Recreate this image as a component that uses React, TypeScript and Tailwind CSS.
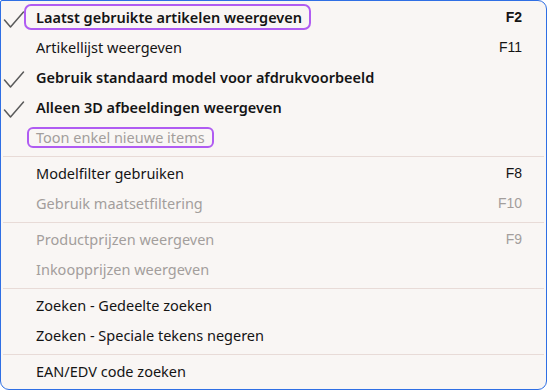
import React from "react";

type Item = {
  label: string;
  shortcut?: string;
  checked?: boolean;
  bold?: boolean;
  disabled?: boolean;
  focus?: "big" | "small";
};

const groups: Item[][] = [
  [
    { label: "Laatst gebruikte artikelen weergeven", shortcut: "F2", checked: true, bold: true, focus: "big" },
    { label: "Artikellijst weergeven", shortcut: "F11" },
    { label: "Gebruik standaard model voor afdrukvoorbeeld", checked: true, bold: true },
    { label: "Alleen 3D afbeeldingen weergeven", checked: true, bold: true },
    { label: "Toon enkel nieuwe items", disabled: true, focus: "small" },
  ],
  [
    { label: "Modelfilter gebruiken", shortcut: "F8" },
    { label: "Gebruik maatsetfiltering", shortcut: "F10", disabled: true },
  ],
  [
    { label: "Productprijzen weergeven", shortcut: "F9", disabled: true },
    { label: "Inkoopprijzen weergeven", disabled: true },
  ],
  [
    { label: "Zoeken - Gedeelte zoeken" },
    { label: "Zoeken - Speciale tekens negeren" },
  ],
  [{ label: "EAN/EDV code zoeken" }],
];

function Check() {
  return (
    <svg width="22" height="22" viewBox="0 0 22 22" className="absolute left-[2px] top-[5px]">
      <path d="M1.5 13 L7.5 20 L20.5 5" fill="none" stroke="#5a5a5a" strokeWidth="1.5" strokeLinecap="round" strokeLinejoin="round" />
    </svg>
  );
}

function Row({ item }: { item: Item }) {
  const color = item.disabled ? "text-[#a39e9c]" : "text-[#141414]";
  return (
    <div className="relative flex h-[30px] items-center pl-[35px] pr-[24px]">
      {item.checked && <Check />}
      <span
        className={`relative text-[14.5px] leading-[20px] ${item.bold ? "font-semibold" : "font-normal"} ${color}`}
        style={{ fontFamily: '"Noto Sans", sans-serif' }}
      >
        {item.focus === "big" && (
          <span className="absolute left-[-12px] right-[-9px] top-[-3px] bottom-[-3px] rounded-[7px] border-2 border-[#b05cf2]" />
        )}
        {item.focus === "small" && (
          <span className="absolute left-[-9px] right-[-9px] top-0 bottom-[-1px] rounded-[6px] border-2 border-[#b05cf2]" />
        )}
        {item.label}
      </span>
      <span className="flex-1" />
      {item.shortcut && (
        <span
          className={`text-[14px] ${item.bold ? "font-bold" : "font-normal"} ${color}`}
          style={{ fontFamily: '"Liberation Sans", Arial, sans-serif' }}
        >
          {item.shortcut}
        </span>
      )}
    </div>
  );
}

export default function App() {
  return (
    <div className="h-[390px] w-[547px] bg-white">
      <div className="box-border flex h-[390px] w-[547px] flex-col rounded-[9px] rounded-tl-[2px] border border-[#2f6fe4] bg-[#f9f6f4] pt-px pb-[2px]">
        {groups.map((g, gi) => (
          <React.Fragment key={gi}>
            {gi > 0 && <div className="mx-[2px] mt-[4px] mb-px h-px bg-[#e8dbd7]" />}
            {g.map((it, i) => (
              <Row key={i} item={it} />
            ))}
          </React.Fragment>
        ))}
      </div>
    </div>
  );
}
